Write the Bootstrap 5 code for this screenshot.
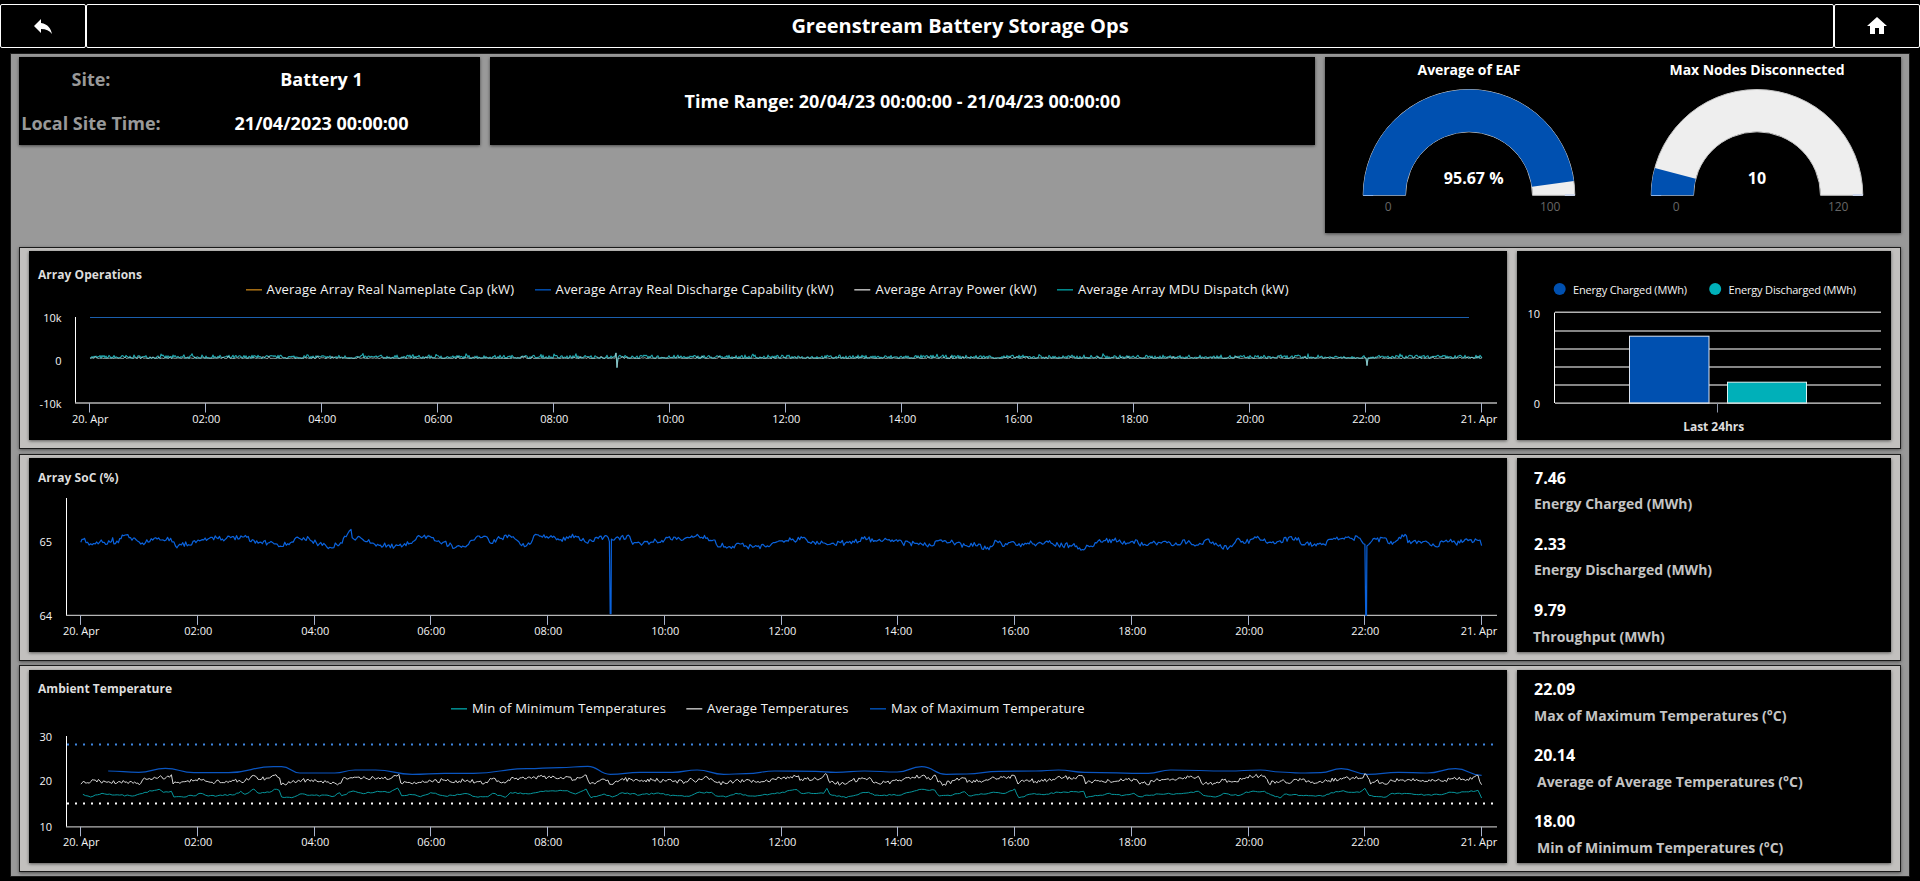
<!DOCTYPE html>
<html lang="en">
<head>
<meta charset="utf-8">
<title>Greenstream Battery Storage Ops</title>
<meta name="viewport" content="width=device-width, initial-scale=1">
<link rel="stylesheet" href="https://cdn.jsdelivr.net/npm/bootstrap@5.3.0/dist/css/bootstrap.min.css">
<style>
  body { background:#000; color:#fff; font-family:"Open Sans","Noto Sans",sans-serif; height:881px; overflow:hidden; }
  .topbar { height:44px; margin-top:4px; }
  .topbar > * { border:1px solid #fff; border-radius:2px; background:#000; color:#fff; }
  .topbar .iconbtn { width:86px; flex:none; }
  .topbar h1 { font-size:20px; font-weight:700; line-height:1; }
  .board { margin:5px 10px 0; height:824px; border:1px solid #1c1c1c; background:#999; padding:3px 8px 0; }
  .tile { background:#000; box-shadow:0 1px 3px rgba(0,0,0,.55); }
  .toprow { height:176px; gap:10px; margin-bottom:14px; }
  .w-site { width:461px; height:88px; }
  .w-site .fld { width:144px; color:#999; font-weight:700; }
  .w-site .half { height:44px; }
  .t18 { font-size:18px; line-height:1; white-space:nowrap; }
  .w-range { width:825px; height:88px; }
  .w-gauge { width:576px; }
  .strip { border:1px solid #1a1a1a; background:#c2c0be; padding:3px 9px 0; gap:10px; box-shadow:0 1px 3px rgba(0,0,0,.5); }
  .strip-a { height:202px; margin-bottom:5px; }
  .strip-b { height:207px; margin-bottom:4px; }
  .strip-c { height:207px; padding-top:4px; }
  .plot { width:1478px; }
  .side { width:374px; }
  .strip-a .tile { height:189px; } .strip-b .tile { height:194px; } .strip-c .tile { height:193px; }
  .stats { padding:9px 17px 0; }
  .strip-c .stats { padding-top:8px; }
  .stat { height:66px; }
  .stat b { display:block; font-size:16px; line-height:22px; font-weight:700; }
  .stat span { display:block; font-size:14px; line-height:20px; font-weight:700; color:#c4c4c4; margin-top:5px; white-space:nowrap; }
  .strip-b .stat:last-child span { margin-top:6px; margin-left:-1px; }
  .strip-c .stat span { margin-top:6px; }
  .strip-c .stat + .stat span { padding-left:3px; }
  svg { display:block; }
  svg text { font-family:"Open Sans","Noto Sans",sans-serif; fill:#f4f4f4; font-weight:500; }
  .tk { font-size:11px; }
  .lg { font-size:13px; }
  svg .ttl { font-size:12px; font-weight:700; fill:#ddd; }
</style>
</head>
<body>
<header class="topbar d-flex">
  <button class="iconbtn d-flex align-items-center justify-content-center p-0" aria-label="Back">
    <svg width="24" height="24" viewBox="0 0 24 24" fill="#fff"><path d="M10 9V5l-7 7 7 7v-4.1c5 0 8.5 1.6 11 5.1-1-5-4-10-11-11z"/></svg>
  </button>
  <h1 class="flex-grow-1 m-0 d-flex align-items-center justify-content-center">Greenstream Battery Storage Ops</h1>
  <button class="iconbtn d-flex align-items-center justify-content-center p-0" aria-label="Home">
    <svg width="24" height="24" viewBox="0 0 24 24" fill="#fff"><path d="M10 20v-6h4v6h5v-8h3L12 3 2 12h3v8z"/></svg>
  </button>
</header>

<main class="board">
  <div class="toprow d-flex">
    <section class="tile w-site t18">
      <div class="half d-flex align-items-center text-center"><div class="fld">Site:</div><div class="flex-grow-1 fw-bold">Battery 1</div></div>
      <div class="half d-flex align-items-center text-center"><div class="fld">Local Site Time:</div><div class="flex-grow-1 fw-bold">21/04/2023 00:00:00</div></div>
    </section>
    <section class="tile w-range t18 fw-bold d-flex align-items-center justify-content-center">Time Range: 20/04/23 00:00:00 - 21/04/23 00:00:00</section>
    <section class="tile w-gauge"><svg id="gauges" width="576" height="176" viewBox="1325 57 576 176"></svg></section>
  </div>

  <div class="strip strip-a d-flex">
    <section class="tile plot"><svg id="ops" width="1478" height="189" viewBox="29 251 1478 189"></svg></section>
    <section class="tile side"><svg id="bars" width="374" height="189" viewBox="1517 251 374 189"></svg></section>
  </div>
  <div class="strip strip-b d-flex">
    <section class="tile plot"><svg id="soc" width="1478" height="194" viewBox="29 458 1478 194"></svg></section>
    <section class="tile side stats">
      <div class="stat"><b>7.46</b><span>Energy Charged (MWh)</span></div>
      <div class="stat"><b>2.33</b><span>Energy Discharged (MWh)</span></div>
      <div class="stat"><b>9.79</b><span>Throughput (MWh)</span></div>
    </section>
  </div>
  <div class="strip strip-c d-flex">
    <section class="tile plot"><svg id="temp" width="1478" height="193" viewBox="29 670 1478 193"></svg></section>
    <section class="tile side stats">
      <div class="stat"><b>22.09</b><span>Max of Maximum Temperatures (°C)</span></div>
      <div class="stat"><b>20.14</b><span>Average of Average Temperatures (°C)</span></div>
      <div class="stat"><b>18.00</b><span>Min of Minimum Temperatures (°C)</span></div>
    </section>
  </div>
</main>

<script src="https://cdn.jsdelivr.net/npm/bootstrap@5.3.0/dist/js/bootstrap.bundle.min.js"></script>
<script>
const put = (id, html) => { document.getElementById(id).innerHTML = html; };
let seed = 7;
const rnd = () => { seed = (seed * 16807) % 2147483647; return seed / 2147483647; };
const line = (x1, y1, x2, y2, c, w = 1, extra = '') => `<line x1="${x1}" y1="${y1}" x2="${x2}" y2="${y2}" stroke="${c}" stroke-width="${w}" ${extra}/>`;
const text = (x, y, s, cls, anchor = 'start', len = 0, extra = '') =>
  `<text x="${x}" y="${y}" class="${cls}" text-anchor="${anchor}" ${len ? `textLength="${len}"` : ''} ${extra}>${s}</text>`;
const legend = (items, y) => items.map(([x, tx, len, c, s]) => line(x, y - 4.2, x + 16, y - 4.2, c, 1.6) + text(tx, y, s, 'lg', 'start', len)).join('');

// Time axis with a tick every two hours
const hours = ['20. Apr','02:00','04:00','06:00','08:00','10:00','12:00','14:00','16:00','18:00','20:00','22:00','21. Apr'];
function timeAxis(x0, y, left, step, base) {
  let s = line(left, y, 1497, y, '#b4b4b4', 1.3);
  hours.forEach((h, i) => {
    const x = Math.round(x0 + step * i) - .5;
    s += line(x, y, x, y + 9.5, '#aab4cc');
    s += text(i === 12 ? 1479 : x + .8, base, h, 'tk', 'middle');
  });
  return s;
}

const join3 = (a, b, c) => [...a, ...b.map(p => [p[0] + 1568, p[1]]), ...c.map(p => [p[0] + 3136, p[1]])];
const KX = 1 / 2.45, KY = 1 / 3;
function jagged(pts, y0, amp, step) {
  const out = [];
  for (let i = 0; i < pts.length - 1; i++) {
    const [ax, ay] = pts[i], [bx, by] = pts[i + 1];
    const n = Math.max(1, Math.round((bx - ax) / step));
    for (let k = 0; k < n; k++) {
      const t = k / n, j = (k === 0 ? 0 : (rnd() - .5) * amp);
      out.push(((ax + (bx - ax) * t) * KX).toFixed(1) + ' ' + (y0 + (ay + (by - ay) * t + j) * KY).toFixed(1));
    }
  }
  const e = pts[pts.length - 1];
  out.push((e[0] * KX).toFixed(1) + ' ' + (y0 + e[1] * KY).toFixed(1));
  return 'M' + out.join('L');
}
function smooth(pts, y0) {
  const p = pts.map(([x, y]) => [x * KX, y0 + y * KY]);
  let d = `M${p[0][0]} ${p[0][1]}`;
  for (let i = 0; i < p.length - 1; i++) {
    const m = (p[i][0] + p[i + 1][0]) / 2;
    d += `C${m} ${p[i][1]} ${m} ${p[i + 1][1]} ${p[i + 1][0]} ${p[i + 1][1]}`;
  }
  return d;
}
const path = (d, c, w = 1) => `<path d="${d}" fill="none" stroke="${c}" stroke-width="${w}" stroke-linejoin="round"/>`;

// Gauges
function gauge(cx, frac, val, vx, max, title, tlen) {
  const cy = 195.3, R = 105.8, r = 63.5, a = Math.PI * (1 - frac);
  const pt = (rad, an) => `${(cx + rad * Math.cos(an)).toFixed(2)} ${(cy - rad * Math.sin(an)).toFixed(2)}`;
  const ring = an => `M${pt(R, Math.PI)}A${R} ${R} 0 0 1 ${pt(R, an)}L${pt(r, an)}A${r} ${r} 0 0 0 ${pt(r, Math.PI)}Z`;
  return `<path d="${ring(0)}" fill="#eee" stroke="#c4c4c4" stroke-width="1"/><path d="${ring(a)}" fill="#0050b0"/>`
    + line(cx - R, 195.5, cx - R + 10, 195.5, '#8fb4e8') + line(cx + R - 10, 195, cx + R, 195, '#ccd6eb', 2)
    + text(cx, 75, title, '', 'middle', tlen, 'style="font-size:14px;font-weight:700;fill:#fff"')
    + text(vx, 183.7, val, '', 'middle', 0, 'style="font-size:16px;font-weight:700;fill:#fff"')
    + text(cx - 80.8, 211, '0', '', 'middle', 0, 'style="font-size:12px;fill:#666;font-weight:400"')
    + text(cx + 81.2, 211, max, '', 'middle', 0, 'style="font-size:12px;fill:#666;font-weight:400"');
}
put('gauges', gauge(1469, .9567, '95.67 %', 1473.7, 100, 'Average of EAF', 103) + gauge(1757, 10 / 120, '10', 1757, 120, 'Max Nodes Disconnected', 175));

// Array operations
(() => {
  const noise = (base, lift) => {
    let d = '';
    for (let x = 90; x <= 1482; x += 1) {
      let y = base - Math.pow(rnd(), 2) * lift - (rnd() < .04 ? 1.5 : 0);
      if (x === 616) y = 353; if (x === 617) y = 367.5; if (x === 1366) y = 358; if (x === 1367) y = 365.5;
      d += (d ? 'L' : 'M') + x + ' ' + y.toFixed(1);
    }
    return d;
  };
  put('ops', text(38, 279, 'Array Operations', 'ttl', 'start', 104)
    + legend([[246, 266.5, 247.5, '#a06a14', 'Average Array Real Nameplate Cap (kW)'],
              [535, 555.5, 278, '#0048a4', 'Average Array Real Discharge Capability (kW)'],
              [854.3, 875.5, 161, '#b0b0b0', 'Average Array Power (kW)'],
              [1057, 1078, 210.5, '#00878a', 'Average Array MDU Dispatch (kW)']], 294)
    + text(61.5, 322, '10k', 'tk', 'end') + text(61.5, 365, '0', 'tk', 'end') + text(61.5, 408, '-10k', 'tk', 'end')
    + line(75.5, 317, 75.5, 403, '#fff') + timeAxis(90, 403, 75, 116.03, 423)
    + line(90, 317.5, 1469, 317.5, '#1b5fae')
    + path(noise(358.2, 3.2), '#22a9b0', 1.1) + path(noise(358.5, 1), '#b9d0d0', .7));
})();

// Energy bars
(() => {
  let s = `<circle cx="1559.7" cy="289" r="6" fill="#0050b0"/>` + text(1573, 294, 'Energy Charged (MWh)', 'tk', 'start', 114)
    + `<circle cx="1715.2" cy="289" r="6" fill="#00b0b9"/>` + text(1728.5, 294, 'Energy Discharged (MWh)', 'tk', 'start', 127.5)
    + text(1540, 318, '10', 'tk', 'end') + text(1540, 408, '0', 'tk', 'end');
  [312.3, 331, 349, 367, 385].forEach(y => { s += line(1555, y, 1881, y, '#b2b2b2', 1.4); });
  s += line(1554.5, 312.5, 1554.5, 403, '#fff')
    + `<rect x="1629.5" y="336.2" width="79.5" height="67" fill="#0050b0" stroke="#dbe4f2"/>`
    + `<rect x="1727.5" y="382.2" width="79" height="21" fill="#00b0b9" stroke="#dbf2f2"/>`
    + line(1555, 403.1, 1881, 403.1, '#dcdcdc', 1.4) + line(1717.5, 403, 1717.5, 412.5, '#8c94a6')
    + text(1683.2, 431, 'Last 24hrs', 'ttl', 'start', 61);
  put('bars', s);
})();

// State of charge
const socPts = join3(
  [[198,307],[207,295],[211,308],[270,307],[276,293],[279,312],[290,308],[303,287],[320,293],[340,305],[345,312],[385,297],[418,295],[430,318],[480,308],[485,300],[520,292],[545,297],[565,293],[605,292],[615,305],[660,308],[683,320],[705,311],[722,297],[740,300],[757,295],[775,308],[808,322],[835,308],[848,290],[860,268],[863,293],[885,295],[900,305],[925,313],[967,320],[1005,310],[1022,290],[1058,293],[1085,307],[1117,322],[1137,320],[1155,301],[1185,289],[1207,310],[1218,296],[1250,288],[1285,320],[1298,313],[1308,287],[1350,287],[1370,300],[1410,288],[1440,310],[1462,292],[1490,293],[1493,305],[1495,521],[1497,521],[1498,297],[1543,290],[1550,313]],
  [[0,310],[40,303],[60,300],[72,290],[90,298],[105,300],[120,293],[137,288],[165,293],[180,300],[187,313],[220,320],[245,312],[262,320],[305,318],[330,308],[360,302],[405,295],[412,307],[470,310],[525,307],[547,296],[590,303],[635,300],[643,309],[690,312],[720,316],[727,302],[745,302],[760,307],[800,317],[830,312],[838,327],[862,320],[870,301],[892,319],[903,308],[940,315],[957,303],[962,312],[1000,307],[1025,316],[1060,315],[1073,327],[1105,318],[1115,308],[1140,302],[1175,300],[1190,313],[1207,304],[1240,316],[1270,307],[1320,314],[1330,300],[1352,314],[1375,312],[1393,297],[1400,310],[1425,323],[1450,320],[1462,298],[1480,310],[1503,296],[1530,297],[1537,310]],
  [[0,302],[45,293],[50,310],[85,312],[112,316],[118,299],[150,296],[192,293],[208,313],[210,526],[212,526],[213,318],[225,303],[260,295],[265,310],[282,306],[292,292],[310,288],[313,308],[350,305],[382,320],[400,306],[418,298],[430,310],[450,304],[475,305],[490,300],[494,317]]);
put('soc', text(38, 482, 'Array SoC (%)', 'ttl', 'start', 80.5)
  + text(52, 546, '65', 'tk', 'end') + text(52, 619.7, '64', 'tk', 'end')
  + line(66.5, 498, 66.5, 615.5, '#fff') + timeAxis(81, 615.4, 66, 116.77, 635)
  + path(jagged(socPts, 440, 15, 3.6), '#0a62dc', 1.2));

// Ambient temperature
const avgPts = join3(
  [[198,402],[205,393],[215,398],[230,390],[245,393],[262,397],[290,395],[330,396],[345,400],[350,388],[390,380],[400,387],[415,382],[420,374],[424,402],[445,396],[480,390],[495,390],[520,397],[570,391],[600,393],[625,378],[632,388],[660,384],[676,374],[685,384],[689,405],[715,395],[740,391],[775,392],[800,396],[835,400],[840,386],[860,383],[900,386],[935,383],[960,384],[977,373],[982,399],[1015,396],[1060,396],[1085,390],[1105,396],[1145,390],[1165,397],[1190,396],[1205,387],[1225,397],[1265,384],[1290,386],[1330,380],[1350,384],[1390,380],[1410,390],[1436,375],[1446,402],[1465,394],[1485,392],[1502,403],[1525,386]],
  [[0,394],[30,390],[60,392],[115,396],[125,385],[140,393],[165,381],[190,398],[215,400],[235,390],[285,397],[330,388],[385,380],[395,388],[440,387],[458,374],[465,398],[500,402],[520,391],[560,384],[570,396],[600,397],[640,393],[655,383],[690,378],[715,386],[723,375],[730,396],[745,402],[785,386],[810,394],[840,394],[860,385],[880,386],[918,377],[926,402],[945,390],[980,395],[1020,384],[1087,381],[1092,402],[1115,390],[1150,393],[1190,386],[1240,402],[1270,390],[1330,387],[1345,382],[1368,379],[1376,400],[1410,400],[1430,390],[1450,396],[1498,380],[1530,378],[1540,400]],
  [[0,394],[30,395],[60,388],[75,398],[120,392],[155,384],[195,385],[212,374],[222,402],[235,393],[260,403],[275,392],[310,390],[350,391],[400,394],[420,386],[470,388],[485,376],[494,404]]);
const minPts = join3(
  [[203,433],[222,441],[250,430],[275,435],[330,437],[355,427],[390,418],[400,427],[420,424],[426,441],[480,437],[490,430],[510,438],[575,434],[590,424],[600,433],[622,417],[632,429],[660,427],[672,418],[684,421],[690,441],[715,443],[735,432],[770,436],[820,438],[832,428],[837,437],[865,423],[890,431],[925,424],[955,427],[974,414],[984,437],[1010,434],[1030,440],[1055,428],[1090,438],[1145,431],[1165,440],[1195,440],[1207,430],[1238,442],[1250,428],[1300,431],[1325,424],[1390,422],[1410,432],[1436,417],[1448,443],[1480,432],[1500,441],[1525,428]],
  [[0,435],[45,429],[75,437],[120,439],[140,428],[175,427],[185,437],[210,441],[235,430],[270,438],[330,431],[385,419],[395,430],[450,430],[458,415],[465,433],[505,443],[540,430],[560,427],[575,436],[640,435],[660,427],[690,418],[722,420],[733,438],[760,437],[795,425],[805,437],[860,428],[895,430],[918,417],[928,443],[960,432],[990,434],[1025,427],[1087,424],[1093,443],[1150,430],[1180,437],[1210,430],[1225,440],[1270,432],[1320,431],[1368,424],[1380,436],[1410,441],[1430,430],[1465,437],[1485,426],[1530,424],[1545,434]],
  [[0,444],[10,433],[70,437],[110,437],[125,428],[155,422],[175,427],[195,427],[208,415],[218,436],[260,441],[275,430],[340,434],[390,434],[420,427],[440,428],[485,421],[494,444]]);
const maxPts = join3(
  [[265,363],[340,367],[405,355],[475,368],[560,368],[670,350],[690,350],[735,369],[820,369],[870,360],[920,360],[1010,373],[1090,370],[1160,370],[1290,356],[1370,353],[1440,349],[1495,373]],
  [[0,367],[80,367],[140,360],[205,373],[260,371],[330,363],[430,364],[480,367],[550,363],[630,366],[690,350],[750,373],[800,372],[880,364],[970,363],[1025,360],[1090,367],[1245,370],[1300,360],[1440,363],[1520,360]],
  [[0,366],[50,369],[100,368],[150,356],[215,373],[290,367],[360,369],[430,356],[494,376]]);
put('temp', text(38, 693, 'Ambient Temperature', 'ttl', 'start', 134)
  + legend([[451, 472, 194, '#00878a', 'Min of Minimum Temperatures'],
            [686.3, 707, 141.5, '#b0b0b0', 'Average Temperatures'],
            [870, 891, 193.5, '#0048a4', 'Max of Maximum Temperature']], 713)
  + text(52, 741, '30', 'tk', 'end') + text(52, 785, '20', 'tk', 'end') + text(52, 831, '10', 'tk', 'end')
  + line(66.5, 736, 66.5, 827, '#fff') + timeAxis(81, 826.8, 66, 116.77, 846)
  + line(67, 744.6, 1494, 744.6, '#3f86e0', 2, 'stroke-dasharray="2 6"')
  + line(67, 803.4, 1494, 803.4, '#fff', 2, 'stroke-dasharray="2 6"')
  + path(smooth(maxPts, 650), '#0a55c0', 1.2)
  + path(jagged(avgPts, 650, 12, 4), '#d8d8d8', 1)
  + path(jagged(minPts, 650, 4, 6), '#06969c', 1));
</script>
</body>
</html>
